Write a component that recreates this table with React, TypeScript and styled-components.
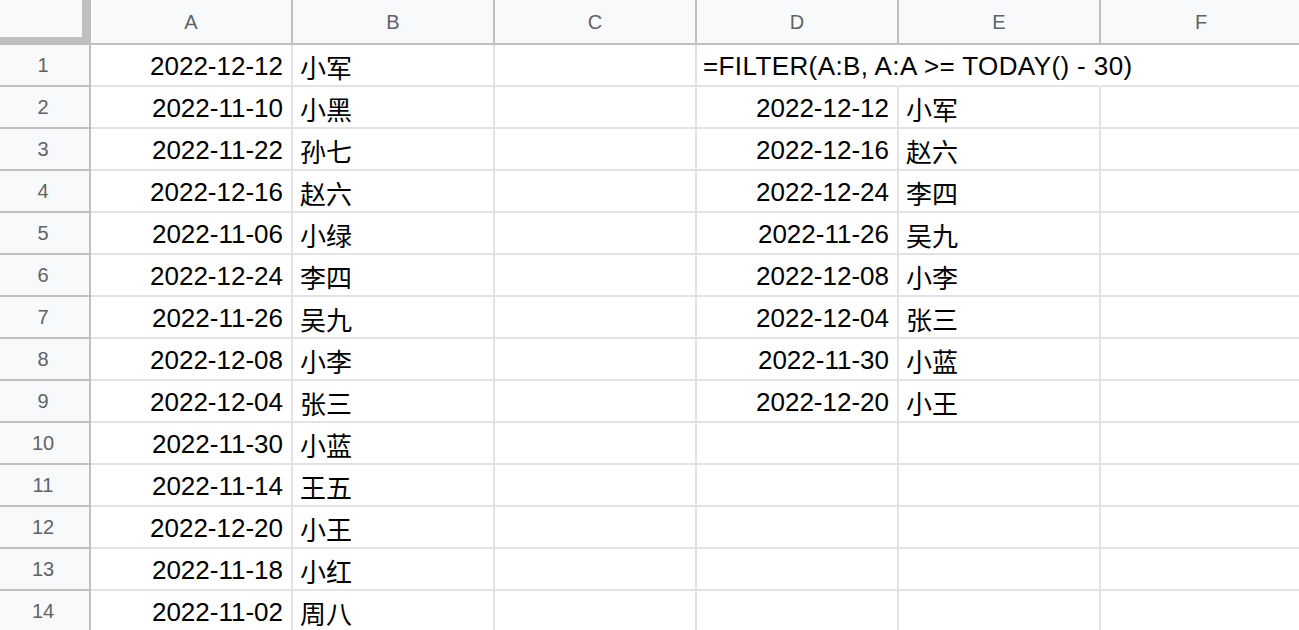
import React from "react";
import styled, { createGlobalStyle } from "styled-components";

const columns = ["A", "B", "C", "D", "E", "F"];

const source: [string, string][] = [
  ["2022-12-12", "小军"],
  ["2022-11-10", "小黑"],
  ["2022-11-22", "孙七"],
  ["2022-12-16", "赵六"],
  ["2022-11-06", "小绿"],
  ["2022-12-24", "李四"],
  ["2022-11-26", "吴九"],
  ["2022-12-08", "小李"],
  ["2022-12-04", "张三"],
  ["2022-11-30", "小蓝"],
  ["2022-11-14", "王五"],
  ["2022-12-20", "小王"],
  ["2022-11-18", "小红"],
  ["2022-11-02", "周八"],
];

const filtered: [string, string][] = [
  ["2022-12-12", "小军"],
  ["2022-12-16", "赵六"],
  ["2022-12-24", "李四"],
  ["2022-11-26", "吴九"],
  ["2022-12-08", "小李"],
  ["2022-12-04", "张三"],
  ["2022-11-30", "小蓝"],
  ["2022-12-20", "小王"],
];

const FORMULA = "=FILTER(A:B, A:A >= TODAY() - 30)";

const GlobalStyle = createGlobalStyle`
  html, body {
    margin: 0;
    padding: 0;
    background: #fff;
    overflow: hidden;
  }
`;

export default function App() {
  return (
    <>
      <GlobalStyle />
      <SSheet>
        <SCorner />
        {columns.map((c) => (
          <SColHeader key={c}>{c}</SColHeader>
        ))}
        {source.map(([date, name], i) => {
          const f = i === 0 ? null : filtered[i - 1];
          return (
            <React.Fragment key={i}>
              <SRowHeader>{i + 1}</SRowHeader>
              <SCell $align="right">{date}</SCell>
              <SCell>{name}</SCell>
              <SCell />
              {i === 0 ? (
                <SFormulaCell>{FORMULA}</SFormulaCell>
              ) : (
                <SCell $align="right">{f ? f[0] : ""}</SCell>
              )}
              <SCell $noRight={i === 0}>{f ? f[1] : ""}</SCell>
              <SCell />
            </React.Fragment>
          );
        })}
      </SSheet>
    </>
  );
}

const headerLine = "#c0c0c0";
const gridLine = "#e2e2e2";

const SSheet = styled.div`
  display: grid;
  grid-template-columns: 91px repeat(6, 202px);
  grid-template-rows: 45px;
  grid-auto-rows: 42px;
  font-family: "Liberation Sans", Arial, "Noto Sans CJK SC", sans-serif;
  width: 1299px;
  height: 630px;
  overflow: hidden;
`;

const SCorner = styled.div`
  box-sizing: border-box;
  background: #f8f9fa;
  border-right: 9px solid #bfbfbf;
  border-bottom: 8px solid #bfbfbf;
`;

const SColHeader = styled.div`
  box-sizing: border-box;
  display: flex;
  align-items: center;
  justify-content: center;
  background: #f8f9fa;
  border-right: 2px solid ${headerLine};
  border-bottom: 2px solid ${headerLine};
  color: #5f6368;
  font-size: 20px;
  padding-top: 1px;
`;

const SRowHeader = styled.div`
  box-sizing: border-box;
  display: flex;
  align-items: center;
  justify-content: center;
  background: #f8f9fa;
  border-right: 2px solid ${headerLine};
  border-bottom: 2px solid ${headerLine};
  color: #5f6368;
  font-size: 20px;
  padding-right: 3px;
`;

const SCell = styled.div<{ $align?: "left" | "right"; $noRight?: boolean }>`
  box-sizing: border-box;
  display: flex;
  align-items: center;
  justify-content: ${(p) => (p.$align === "right" ? "flex-end" : "flex-start")};
  padding: 2px 8px 0 7px;
  border-right: 2px solid ${(p) => (p.$noRight ? "transparent" : gridLine)};
  border-bottom: 2px solid ${gridLine};
  color: #000;
  font-size: 26px;
  white-space: nowrap;
  overflow: hidden;
`;

const SFormulaCell = styled(SCell)`
  overflow: visible;
  position: relative;
  z-index: 1;
  border-right-color: transparent;
  padding-left: 6px;
  letter-spacing: 0.4px;
`;
